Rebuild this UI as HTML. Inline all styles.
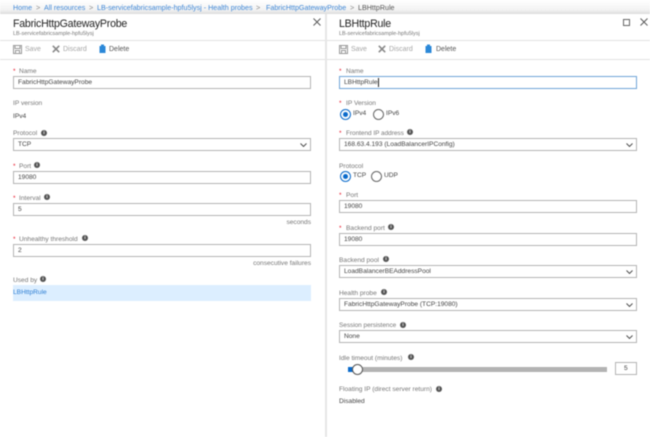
<!DOCTYPE html>
<html><head><meta charset="utf-8"><style>
html,body{margin:0;padding:0}
body{width:650px;height:437px;overflow:hidden;background:#fff;position:relative;font-family:"Liberation Sans",sans-serif;color:#444}
#w{position:absolute;left:0;top:0;width:650px;height:437px;filter:blur(.4px)}
.t{position:absolute;white-space:nowrap;font-size:6.6px;line-height:10px;height:10px;margin-top:2px}
.o{margin-top:1px}
.bc{font-size:7.15px;color:#3f87d6;margin-top:1px}
.s{font-size:7.4px;color:#888;margin-top:1px}
.ti{font-size:10.6px;letter-spacing:-.22px;line-height:15px;height:15px;color:#222;margin-top:1px}
.su{font-size:5.5px;color:#777;margin-top:1px}
.l{color:#777;font-size:6.6px;margin-top:1.5px}
.r{color:#e81123}
.b{position:absolute;background:#fff;border:1px solid #b4b4b4;box-sizing:border-box;height:13px;width:298px}
.h{position:absolute;background:#e2e2e2;height:1px}
.i{position:absolute;width:6px;height:6px;margin-top:-1px;border-radius:50%;background:#555;color:#fff;font-size:4.5px;line-height:6px;text-align:center;font-weight:bold}
svg{position:absolute;overflow:visible}
.rd{position:absolute;width:11px;height:11px;border-radius:50%;border:1px solid #666;box-sizing:border-box;background:#fff}
.rd.on{border-color:#0b6bcb}
.rd.on:after{content:"";position:absolute;left:2px;top:2px;width:5px;height:5px;border-radius:50%;background:#0b6bcb}
</style></head><body><div id="w">

<div style="position:absolute;left:0;top:0;width:650px;height:14px;background:linear-gradient(#fff,#f3f3f3 70%,#dcdcdc)"></div>
<div class="t bc" style="left:13px;top:2px">Home</div>
<div class="t s" style="left:36px;top:2px">&gt;</div>
<div class="t bc" style="left:44px;top:2px">All resources</div>
<div class="t s" style="left:89px;top:2px">&gt;</div>
<div class="t bc" style="left:97px;top:2px">LB-servicefabricsample-hpfu5lysj - Health probes</div>
<div class="t s" style="left:256px;top:2px">&gt;</div>
<div class="t bc" style="left:266px;top:2px">FabricHttpGatewayProbe</div>
<div class="t s" style="left:350px;top:2px">&gt;</div>
<div class="t bc" style="left:358px;top:2px;color:#555">LBHttpRule</div>

<div style="position:absolute;left:325px;top:14px;width:2px;height:423px;background:#e6e6e6"></div>

<div class="t ti" style="left:13px;top:16px">FabricHttpGatewayProbe</div>
<div class="t su" style="left:13px;top:28px">LB-servicefabricsample-hpfu5lysj</div>
<svg style="left:313px;top:18px" width="8" height="8"><path d="M.5 .5L7.5 7.5M7.5 .5L.5 7.5" stroke="#555" stroke-width=".9"/></svg>
<div class="h" style="left:0;top:40px;width:325px"></div>
<div class="h" style="left:0;top:59px;width:325px"></div>
<svg style="left:13px;top:45px" width="9" height="9"><path d="M.5 .5H8.5V8.5H.5ZM2 .5V3.5H7V.5M2.5 8.5V5.5H6.5V8.5" fill="none" stroke="#999" stroke-width="1"/></svg>
<div class="t o" style="left:25px;top:44px;color:#a6a6a6;font-size:7px">Save</div>
<svg style="left:52px;top:45px" width="8" height="8"><path d="M.8 .8L7.2 7.2M7.2 .8L.8 7.2" stroke="#888" stroke-width="1.6"/></svg>
<div class="t o" style="left:63px;top:44px;color:#a6a6a6;font-size:7px">Discard</div>
<svg style="left:99px;top:44px" width="7" height="9"><path d="M.5 2H6.5V9H.5ZM2 .5H5V2H2Z" fill="#2b88d8"/></svg>
<div class="t o" style="left:109px;top:44px;color:#555;font-size:7px">Delete</div>

<div class="t r" style="left:13px;top:65px">*</div><div class="t l" style="left:19px;top:65px">Name</div>
<div class="b" style="left:13px;top:76px"></div><div class="t" style="left:18px;top:76px">FabricHttpGatewayProbe</div>
<div class="t l" style="left:13px;top:97px">IP version</div>
<div class="t" style="left:13px;top:110px">IPv4</div>
<div class="t l" style="left:13px;top:127px">Protocol</div><div class="i" style="left:41px;top:131px">i</div>
<div class="b" style="left:13px;top:138px"></div><div class="t" style="left:18px;top:138px">TCP</div>
<svg style="left:300px;top:143px" width="7" height="4"><path d="M.5 .5L3.5 3.5L6.5 .5" fill="none" stroke="#444" stroke-width=".9"/></svg>
<div class="t r" style="left:13px;top:160px">*</div><div class="t l" style="left:19px;top:160px">Port</div><div class="i" style="left:34px;top:163px">i</div>
<div class="b" style="left:13px;top:171px"></div><div class="t" style="left:18px;top:171px">19080</div>
<div class="t r" style="left:13px;top:192px">*</div><div class="t l" style="left:19px;top:192px">Interval</div><div class="i" style="left:44px;top:195px">i</div>
<div class="b" style="left:13px;top:203px"></div><div class="t" style="left:18px;top:203px">5</div>
<div class="t l" style="right:339px;top:216px">seconds</div>
<div class="t r" style="left:13px;top:233px">*</div><div class="t l" style="left:19px;top:233px">Unhealthy threshold</div><div class="i" style="left:82px;top:236px">i</div>
<div class="b" style="left:13px;top:244px"></div><div class="t" style="left:18px;top:244px">2</div>
<div class="t l" style="right:339px;top:257px">consecutive failures</div>
<div class="t l" style="left:13px;top:274px">Used by</div><div class="i" style="left:40px;top:277px">i</div>
<div style="position:absolute;left:13px;top:285px;width:298px;height:16px;background:#dceeff"></div>
<div class="t" style="left:13px;top:286px;color:#2f7fd3">LBHttpRule</div>

<div class="t ti" style="left:339px;top:16px">LBHttpRule</div>
<div class="t su" style="left:339px;top:28px">LB-servicefabricsample-hpfu5lysj</div>
<svg style="left:623px;top:19px" width="7" height="7"><rect x=".5" y=".5" width="6" height="6" fill="none" stroke="#555" stroke-width=".9"/></svg>
<svg style="left:640px;top:18px" width="8" height="8"><path d="M.5 .5L7.5 7.5M7.5 .5L.5 7.5" stroke="#555" stroke-width=".9"/></svg>
<div class="h" style="left:327px;top:40px;width:323px"></div>
<div class="h" style="left:327px;top:59px;width:323px"></div>
<svg style="left:339px;top:45px" width="9" height="9"><path d="M.5 .5H8.5V8.5H.5ZM2 .5V3.5H7V.5M2.5 8.5V5.5H6.5V8.5" fill="none" stroke="#999" stroke-width="1"/></svg>
<div class="t o" style="left:351px;top:44px;color:#a6a6a6;font-size:7px">Save</div>
<svg style="left:378px;top:45px" width="8" height="8"><path d="M.8 .8L7.2 7.2M7.2 .8L.8 7.2" stroke="#888" stroke-width="1.6"/></svg>
<div class="t o" style="left:389px;top:44px;color:#a6a6a6;font-size:7px">Discard</div>
<svg style="left:425px;top:44px" width="7" height="9"><path d="M.5 2H6.5V9H.5ZM2 .5H5V2H2Z" fill="#2b88d8"/></svg>
<div class="t o" style="left:436px;top:44px;color:#555;font-size:7px">Delete</div>

<div class="t r" style="left:339px;top:65px">*</div><div class="t l" style="left:346px;top:65px">Name</div>
<div class="b" style="left:339px;top:76px;border-color:#6fa5d8"></div><div class="t" style="left:344px;top:76px">LBHttpRule</div>
<div style="position:absolute;left:378px;top:78px;width:1px;height:9px;background:#222"></div>
<div class="t r" style="left:339px;top:97px">*</div><div class="t l" style="left:346px;top:97px">IP Version</div>
<div class="rd on" style="left:340px;top:109px"></div><div class="t" style="left:353px;top:107px">IPv4</div>
<div class="rd" style="left:373px;top:109px"></div><div class="t" style="left:386px;top:107px">IPv6</div>
<div class="t r" style="left:339px;top:127px">*</div><div class="t l" style="left:346px;top:127px;font-size:6.4px">Frontend IP address</div><div class="i" style="left:407px;top:130px">i</div>
<div class="b" style="left:339px;top:138px"></div><div class="t" style="left:344px;top:138px">168.63.4.193 (LoadBalancerIPConfig)</div>
<svg style="left:626px;top:143px" width="7" height="4"><path d="M.5 .5L3.5 3.5L6.5 .5" fill="none" stroke="#444" stroke-width=".9"/></svg>
<div class="t l" style="left:339px;top:160px">Protocol</div>
<div class="rd on" style="left:340px;top:171px"></div><div class="t" style="left:353px;top:169px">TCP</div>
<div class="rd" style="left:371px;top:171px"></div><div class="t" style="left:384px;top:169px">UDP</div>
<div class="t r" style="left:339px;top:189px">*</div><div class="t l" style="left:346px;top:189px">Port</div>
<div class="b" style="left:339px;top:200px"></div><div class="t" style="left:344px;top:200px">19080</div>
<div class="t r" style="left:339px;top:222px">*</div><div class="t l" style="left:346px;top:222px">Backend port</div><div class="i" style="left:388px;top:225px">i</div>
<div class="b" style="left:339px;top:233px"></div><div class="t" style="left:344px;top:233px">19080</div>
<div class="t l" style="left:339px;top:254px">Backend pool</div><div class="i" style="left:383px;top:257px">i</div>
<div class="b" style="left:339px;top:265px"></div><div class="t" style="left:344px;top:265px">LoadBalancerBEAddressPool</div>
<svg style="left:626px;top:270px" width="7" height="4"><path d="M.5 .5L3.5 3.5L6.5 .5" fill="none" stroke="#444" stroke-width=".9"/></svg>
<div class="t l" style="left:339px;top:287px">Health probe</div><div class="i" style="left:381px;top:290px">i</div>
<div class="b" style="left:339px;top:298px"></div><div class="t" style="left:344px;top:298px">FabricHttpGatewayProbe (TCP:19080)</div>
<svg style="left:626px;top:303px" width="7" height="4"><path d="M.5 .5L3.5 3.5L6.5 .5" fill="none" stroke="#444" stroke-width=".9"/></svg>
<div class="t l" style="left:339px;top:319px;font-size:6.4px">Session persistence</div><div class="i" style="left:400px;top:323px">i</div>
<div class="b" style="left:339px;top:330px"></div><div class="t" style="left:344px;top:330px">None</div>
<svg style="left:626px;top:335px" width="7" height="4"><path d="M.5 .5L3.5 3.5L6.5 .5" fill="none" stroke="#444" stroke-width=".9"/></svg>
<div class="t l" style="left:339px;top:352px">Idle timeout (minutes)</div><div class="i" style="left:408px;top:355px">i</div>
<div style="position:absolute;left:348px;top:367px;width:259px;height:5px;background:#b3b3b3"></div>
<div style="position:absolute;left:348px;top:367px;width:8px;height:5px;background:#0b6bcb"></div>
<div style="position:absolute;left:352px;top:364px;width:11px;height:11px;border-radius:50%;background:#fff;border:1px solid #555;box-sizing:border-box"></div>
<div class="b" style="left:615px;top:362px;width:22px"></div><div class="t" style="left:624px;top:362px">5</div>
<div class="t l" style="left:339px;top:383px">Floating IP (direct server return)</div><div class="i" style="left:436px;top:387px">i</div>
<div class="t" style="left:339px;top:395px">Disabled</div>

</div></body></html>
